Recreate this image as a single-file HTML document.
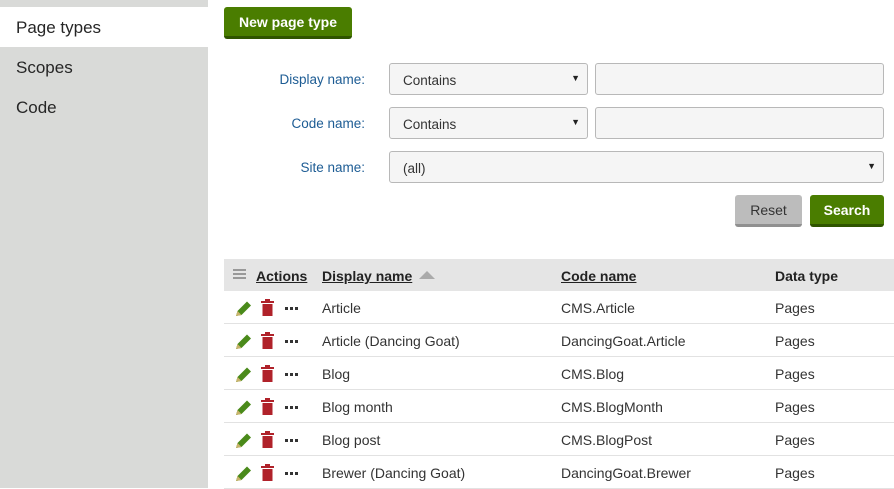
<!DOCTYPE html>
<html><head><style>
*{margin:0;padding:0;box-sizing:border-box}
body{width:894px;height:488px;overflow:hidden;background:#fff;font-family:"Liberation Sans",sans-serif;font-size:14px;color:#333;position:relative}
.abs{position:absolute}
.side{left:0;top:0;width:208px;height:488px;background:#d9dad8}
.nav{left:16px;font-size:17px;color:#262626}
.btn{position:absolute;border-radius:3px;color:#fff;font-weight:bold;font-size:14px;text-align:center;border-bottom:3px solid #2f5400;background:#4a7d00}
.lbl{position:absolute;color:#1d5c94;font-size:13.5px;text-align:right;width:150px}
.sel{position:absolute;background:#f5f5f5;border:1px solid #b8b8b8;border-radius:3px;height:32px;font-size:13.5px;padding:9px 13px;color:#333}
.sel:after{content:"▼";position:absolute;right:7px;top:9px;font-size:9px;color:#222}
.inp{position:absolute;background:#f5f5f5;border:1px solid #b8b8b8;border-radius:3px;height:32px}
.hdr{left:224px;top:259px;width:670px;height:32px;background:#e5e5e5}
.h{position:absolute;top:268px;font-weight:bold;text-decoration:underline;color:#222;font-size:14px}
.row{position:absolute;left:224px;width:670px;height:33px;border-bottom:1px solid #e2e2e2}
.row span{position:absolute;top:9px;font-size:14px;color:#333}
.ic{position:absolute;top:8px}
</style></head><body>
<div class="abs side"></div>
<div class="abs" style="left:0;top:7px;width:208px;height:40px;background:#fff"></div>
<div class="abs nav" style="top:18px">Page types</div>
<div class="abs nav" style="top:58px">Scopes</div>
<div class="abs nav" style="top:98px">Code</div>

<div class="btn" style="left:224px;top:7px;width:128px;height:32px;line-height:31px">New page type</div>

<div class="lbl" style="left:215px;top:72px">Display name:</div>
<div class="sel" style="left:389px;top:63px;width:199px">Contains</div>
<div class="inp" style="left:595px;top:63px;width:289px"></div>
<div class="lbl" style="left:215px;top:116px">Code name:</div>
<div class="sel" style="left:389px;top:107px;width:199px">Contains</div>
<div class="inp" style="left:595px;top:107px;width:289px"></div>
<div class="lbl" style="left:215px;top:160px">Site name:</div>
<div class="sel" style="left:389px;top:151px;width:495px">(all)</div>

<div class="btn" style="left:735px;top:195px;width:67px;height:32px;line-height:31px;background:#bcbcbc;border-bottom-color:#909090;color:#333;font-weight:normal">Reset</div>
<div class="btn" style="left:810px;top:195px;width:74px;height:32px;line-height:31px">Search</div>

<div class="abs hdr"></div>
<div class="abs" style="left:233px;top:269px;width:13px;height:2px;background:#999;box-shadow:0 4px 0 #999,0 8px 0 #999"></div>
<div class="h" style="left:256px">Actions</div>
<div class="h" style="left:322px">Display name</div>
<div class="abs" style="left:419px;top:271px;width:0;height:0;border-left:8px solid transparent;border-right:8px solid transparent;border-bottom:8px solid #aaa"></div>
<div class="h" style="left:561px">Code name</div>
<div class="h" style="left:775px;text-decoration:none">Data type</div>

<div id="rows"></div>
<script>
var d=[["Article","CMS.Article"],["Article (Dancing Goat)","DancingGoat.Article"],["Blog","CMS.Blog"],["Blog month","CMS.BlogMonth"],["Blog post","CMS.BlogPost"],["Brewer (Dancing Goat)","DancingGoat.Brewer"]];
var h="";
d.forEach(function(r,i){var t=291+i*33;
h+='<div class="row" style="top:'+t+'px">'+
'<svg class="ic" style="left:11px;top:9px" width="18" height="17" viewBox="0 0 18 17"><path d="M1 16 L2.5 11 L12 1.5 L16 5.5 L6.5 15 Z" fill="#4a8a1a"/><path d="M1 16 L2.5 11 L6.5 15 Z" fill="#c9b36b"/></svg>'+
'<svg class="ic" style="left:37px;top:8px" width="13" height="17" viewBox="0 0 13 17"><rect x="0" y="2" width="13" height="2" fill="#b0222a"/><rect x="4" y="0" width="5" height="2" fill="#b0222a"/><rect x="1.5" y="5" width="10" height="12" fill="#b0222a"/></svg>'+
'<svg class="ic" style="left:61px;top:16px" width="14" height="4"><rect x="0" y="0" width="3" height="3" fill="#333"/><rect x="5" y="0" width="3" height="3" fill="#333"/><rect x="10" y="0" width="3" height="3" fill="#333"/></svg>'+
'<span style="left:98px">'+r[0]+'</span><span style="left:337px">'+r[1]+'</span><span style="left:551px">Pages</span></div>';});
document.getElementById("rows").innerHTML=h;
</script>
</body></html>
